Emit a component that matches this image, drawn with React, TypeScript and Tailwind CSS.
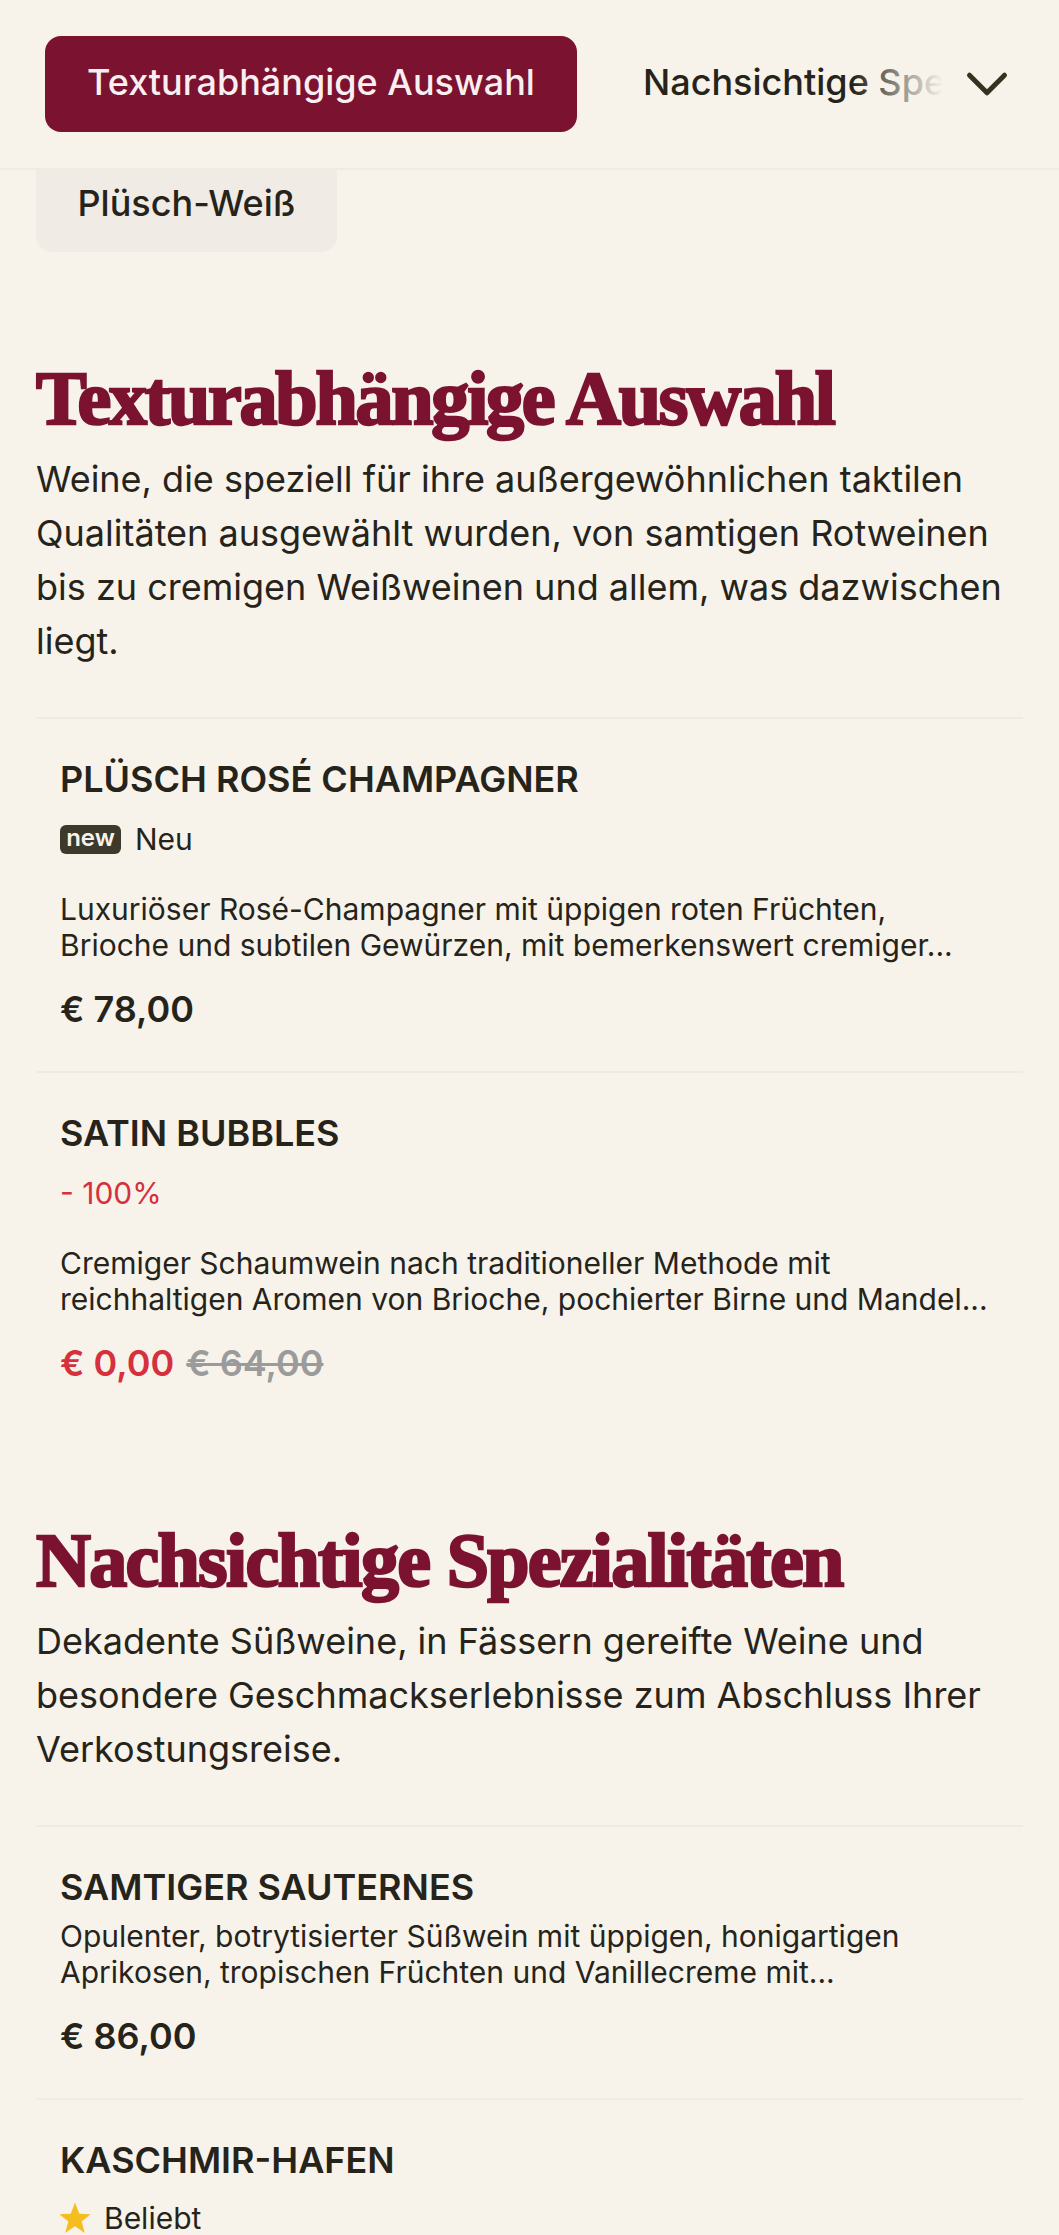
import React from 'react';
import { ChevronDown } from 'lucide-react';

interface WineItem {
  name: string;
  badge?: 'new' | 'sale' | 'star';
  badgeLabel?: string;
  lines?: string[];
  price?: string;
  oldPrice?: string;
}

const TEXTURE_ITEMS: WineItem[] = [
  {
    name: 'PLÜSCH ROSÉ CHAMPAGNER',
    badge: 'new',
    badgeLabel: 'Neu',
    lines: ['Luxuriöser Rosé-Champagner mit üppigen roten Früchten,', 'Brioche und subtilen Gewürzen, mit bemerkenswert cremiger...'],
    price: '€ 78,00',
  },
  {
    name: 'SATIN BUBBLES',
    badge: 'sale',
    badgeLabel: '- 100%',
    lines: ['Cremiger Schaumwein nach traditioneller Methode mit', 'reichhaltigen Aromen von Brioche, pochierter Birne und Mandel...'],
    price: '€ 0,00',
    oldPrice: '€ 64,00',
  },
];

const INDULGENT_ITEMS: WineItem[] = [
  {
    name: 'SAMTIGER SAUTERNES',
    lines: ['Opulenter, botrytisierter Süßwein mit üppigen, honigartigen', 'Aprikosen, tropischen Früchten und Vanillecreme mit...'],
    price: '€ 86,00',
  },
  {
    name: 'KASCHMIR-HAFEN',
    badge: 'star',
    badgeLabel: 'Beliebt',
  },
];

function Badge({ item }: { item: WineItem }) {
  if (item.badge === 'sale') {
    return <div className="mt-[22px] h-[36px] text-[30px] leading-[36px] text-[#d6303c]">{item.badgeLabel}</div>;
  }
  return (
    <div className={`${item.badge === 'star' ? 'mt-[20px]' : 'mt-[22px]'} flex h-[36px] items-center`}>
      {item.badge === 'new' && (
        <span className="mr-[14px] flex h-[29px] w-[61px] items-center justify-center rounded-[6px] bg-[#3d3a2c] pb-[2px] text-[24px] font-semibold leading-none text-[#f7f3eb]">
          new
        </span>
      )}
      {item.badge === 'star' && (
        <svg className="-ml-[2px] mr-[12px] h-[34px] w-[34px]" viewBox="0 0 24 24" fill="#f5bd1f">
          <path d="M12 1l3 8 8 .4-6.300 5 2.200 8.100L12 17.900 5.100 22.500l2.200-8.100L1 9.400 9 9z" />
        </svg>
      )}
      <span className="text-[30px] leading-[36px] text-[#26241a]">{item.badgeLabel}</span>
    </div>
  );
}

function WineRow({ item }: { item: WineItem }) {
  return (
    <div className="border-t-2 border-[#efebe4] px-[24px] pb-[40px] pt-[40px]">
      <h3 className="text-[36px] font-semibold leading-[40px] text-[#26241a]">{item.name}</h3>
      {item.badge && <Badge item={item} />}
      {item.lines && (
        <p className={`${item.badge ? 'mt-[34px]' : 'mt-[11px]'} text-[30px] leading-[36px] text-[#26241a]`}>
          {item.lines.map(line => (
            <span key={line} className="block whitespace-nowrap">{line}</span>
          ))}
        </p>
      )}
      {item.price && (
        <div className="mt-[24px] flex items-baseline gap-[12px] text-[36px] font-semibold leading-[44px]">
          <span className={item.oldPrice ? 'text-[#d6303c]' : 'text-[#26241a]'}>{item.price}</span>
          {item.oldPrice && <span className="text-[#9b9b9b] line-through">{item.oldPrice}</span>}
        </div>
      )}
    </div>
  );
}

function Section({ title, titleClass, text, items, className }: { title: string; titleClass: string; text: string[]; items: WineItem[]; className: string }) {
  return (
    <section className={className}>
      <h2 className={`whitespace-nowrap font-['Liberation_Serif',serif] text-[76px] font-bold leading-[80px] text-[#7a1230] [-webkit-text-stroke:2.5px_#7a1230] ${titleClass}`}>
        {title}
      </h2>
      <p className="mt-[14px] text-[36px] leading-[54px] text-[#26241a]">
        {text.map(line => (
          <span key={line} className="block whitespace-nowrap">{line}</span>
        ))}
      </p>
      <div className="mt-[49px]">
        {items.map(item => (
          <WineRow key={item.name} item={item} />
        ))}
      </div>
    </section>
  );
}

export default function App() {
  return (
    <div className="h-[2235px] w-[1059px] overflow-hidden bg-[#f7f3eb] font-['Inter',sans-serif]">
      {/* Sticky category nav */}
      <div className="flex h-[170px] items-start border-b-2 border-[#efebe4] pl-[45px] pt-[36px]">
        <div className="flex h-[96px] w-[532px] shrink-0 items-center justify-center rounded-[16px] bg-[#7a1230] pb-[4px] text-[36px] font-medium text-[#f9eef0]">
          Texturabhängige Auswahl
        </div>
        <div className="relative ml-[66px] flex h-[96px] w-[300px] shrink-0 items-center overflow-hidden whitespace-nowrap pb-[4px] text-[36px] font-medium text-[#26241a]">
          Nachsichtige Spezialitäten
          <div className="absolute inset-y-0 right-0 w-[90px] bg-gradient-to-r from-transparent to-[#f7f3eb]" />
        </div>
        <ChevronDown className="ml-[9px] mt-[13px] h-[70px] w-[70px] text-[#35321f]" strokeWidth={1.7} />
      </div>

      {/* Last filter pill, scrolled under the nav */}
      <div className="ml-[36px] flex h-[82px] w-[301px] items-center justify-center rounded-b-[16px] bg-[#f0ebe5] pb-[16px] text-[36px] font-medium text-[#26241a]">
        Plüsch-Weiß
      </div>

      <div className="px-[36px]">
        <Section
          className="mt-[106px]"
          titleClass="tracking-[-2.2px]"
          title="Texturabhängige Auswahl"
          text={[
            'Weine, die speziell für ihre außergewöhnlichen taktilen',
            'Qualitäten ausgewählt wurden, von samtigen Rotweinen',
            'bis zu cremigen Weißweinen und allem, was dazwischen',
            'liegt.',
          ]}
          items={TEXTURE_ITEMS}
        />
        <Section
          className="mt-[95px]"
          titleClass="tracking-[-1.7px]"
          title="Nachsichtige Spezialitäten"
          text={[
            'Dekadente Süßweine, in Fässern gereifte Weine und',
            'besondere Geschmackserlebnisse zum Abschluss Ihrer',
            'Verkostungsreise.',
          ]}
          items={INDULGENT_ITEMS}
        />
      </div>
    </div>
  );
}
